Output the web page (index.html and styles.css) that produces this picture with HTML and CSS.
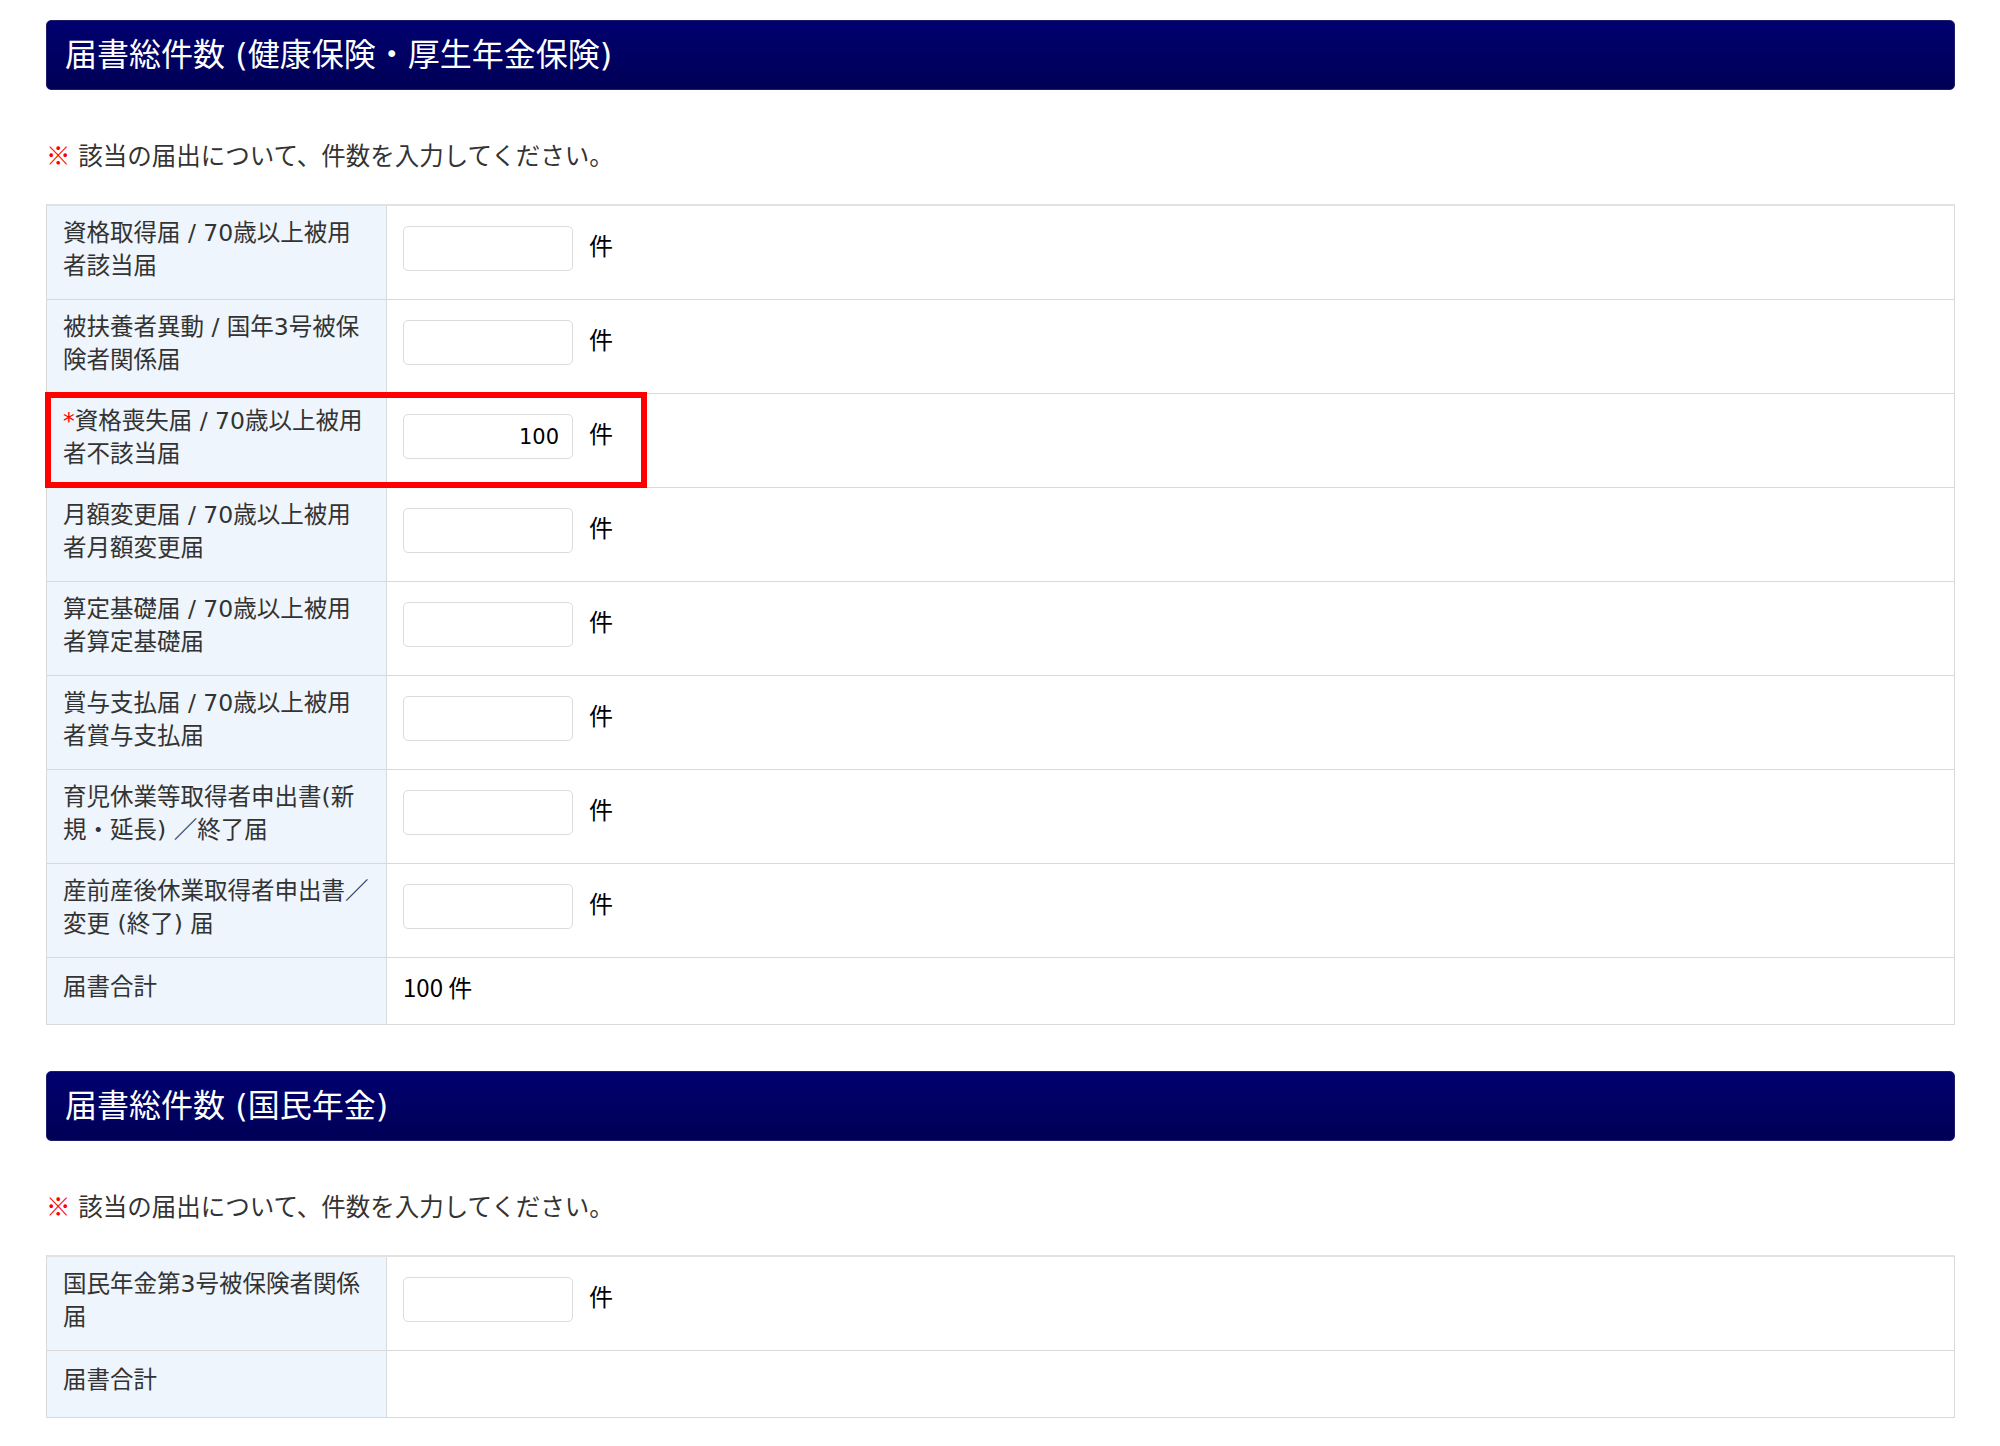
FILE: index.html
```html
<!DOCTYPE html>
<html lang="ja">

<head>
  <meta charset="utf-8">
  <meta name="viewport" content="width=device-width, initial-scale=1">
  <title>届書総件数</title>
  <link rel="stylesheet" href="styles.css">
</head>

<body>
  <div class="container">
    <section class="count-section">
      <h2 class="section-title">届書総件数 (健康保険・厚生年金保険)</h2>
      <p class="note"><span class="note-mark">※</span> 該当の届出について、件数を入力してください。</p>
      <div class="count-table">
        <div class="count-row">
          <div class="count-label">資格取得届 / 70歳以上被用<br>者該当届</div>
          <div class="count-value"><input type="text" class="count-input"><span class="unit">件</span></div>
        </div>
        <div class="count-row">
          <div class="count-label">被扶養者異動 / 国年3号被保<br>険者関係届</div>
          <div class="count-value"><input type="text" class="count-input"><span class="unit">件</span></div>
        </div>
        <div class="count-row is-error">
          <div class="count-label"><span class="required">*</span>資格喪失届 / 70歳以上被用<br>者不該当届</div>
          <div class="count-value"><input type="text" class="count-input" value="100"><span class="unit">件</span></div>
        </div>
        <div class="count-row">
          <div class="count-label">月額変更届 / 70歳以上被用<br>者月額変更届</div>
          <div class="count-value"><input type="text" class="count-input"><span class="unit">件</span></div>
        </div>
        <div class="count-row">
          <div class="count-label">算定基礎届 / 70歳以上被用<br>者算定基礎届</div>
          <div class="count-value"><input type="text" class="count-input"><span class="unit">件</span></div>
        </div>
        <div class="count-row">
          <div class="count-label">賞与支払届 / 70歳以上被用<br>者賞与支払届</div>
          <div class="count-value"><input type="text" class="count-input"><span class="unit">件</span></div>
        </div>
        <div class="count-row">
          <div class="count-label">育児休業等取得者申出書(新<br>規・延長) ／終了届</div>
          <div class="count-value"><input type="text" class="count-input"><span class="unit">件</span></div>
        </div>
        <div class="count-row">
          <div class="count-label">産前産後休業取得者申出書／<br>変更 (終了) 届</div>
          <div class="count-value"><input type="text" class="count-input"><span class="unit">件</span></div>
        </div>
        <div class="count-row total-row">
          <div class="count-label">届書合計</div>
          <div class="count-value">100 件</div>
        </div>
      </div>
    </section>

    <section class="count-section">
      <h2 class="section-title">届書総件数 (国民年金)</h2>
      <p class="note"><span class="note-mark">※</span> 該当の届出について、件数を入力してください。</p>
      <div class="count-table">
        <div class="count-row">
          <div class="count-label">国民年金第3号被保険者関係<br>届</div>
          <div class="count-value"><input type="text" class="count-input"><span class="unit">件</span></div>
        </div>
        <div class="count-row total-row">
          <div class="count-label">届書合計</div>
          <div class="count-value"></div>
        </div>
      </div>
    </section>
  </div>
</body>

</html>
```

FILE: styles.css
```css
body {
  margin: 0;
  font-family: "DejaVu Sans", "Noto Sans CJK JP", sans-serif;
  background-color: #fff;
  color: #333;
}
.container {
  width: 1909px;
  padding: 20px 0 0 46px;
}
.count-section {
  margin-bottom: 46px;
}
.section-title {
  display: flex;
  align-items: center;
  box-sizing: border-box;
  height: 70px;
  margin: 0 0 48px;
  padding: 0 18px;
  border: 1px solid #1d1d6c;
  border-radius: 5px;
  background: linear-gradient(#000070, #000056);
  color: #fff;
  font-size: 32px;
  font-weight: normal;
  line-height: 1;
}
.note {
  margin: 0 0 31px;
  font-size: 24.5px;
  line-height: 33px;
}
.note-mark {
  font-family: "Noto Sans CJK JP", sans-serif;
}
.note-mark,
.required {
  color: #f00;
}
.count-table {
  border: 1px solid #dadada;
  border-top: 2px solid #e2e2e2;
}
.count-row {
  display: grid;
  grid-template-columns: 340px 1fr;
  border-bottom: 1px solid #d9d9d9;
}
.count-row:last-child {
  border-bottom: none;
}
.count-label {
  box-sizing: border-box;
  padding: 10.5px 16px 16.5px;
  border-right: 1px solid #d6dbe0;
  background-color: #eef5fc;
  font-size: 23.5px;
  line-height: 33px;
  white-space: nowrap;
}
.count-value {
  display: flex;
  align-items: center;
  gap: 16px;
  padding: 0 16px 8px;
  color: #000;
  font-family: "Noto Sans CJK JP", sans-serif;
  font-size: 24px;
  line-height: 33px;
}
.count-input {
  box-sizing: border-box;
  width: 170px;
  height: 45px;
  padding: 0 13px;
  border: 1px solid #dcdcdc;
  border-radius: 5px;
  font-family: "DejaVu Sans", sans-serif;
  font-size: 21px;
  color: #000;
  text-align: right;
}
.unit {
  margin-bottom: 7px;
  line-height: 1;
}
.total-row .count-label {
  padding-top: 12.5px;
  padding-bottom: 20.5px;
}
.total-row .count-value {
  padding-bottom: 10px;
}
.is-error {
  position: relative;
}
.is-error::after {
  content: "";
  position: absolute;
  top: -2px;
  left: -2px;
  bottom: -1px;
  width: 602px;
  box-sizing: border-box;
  border: 6px solid #f00;
  pointer-events: none;
}
```
